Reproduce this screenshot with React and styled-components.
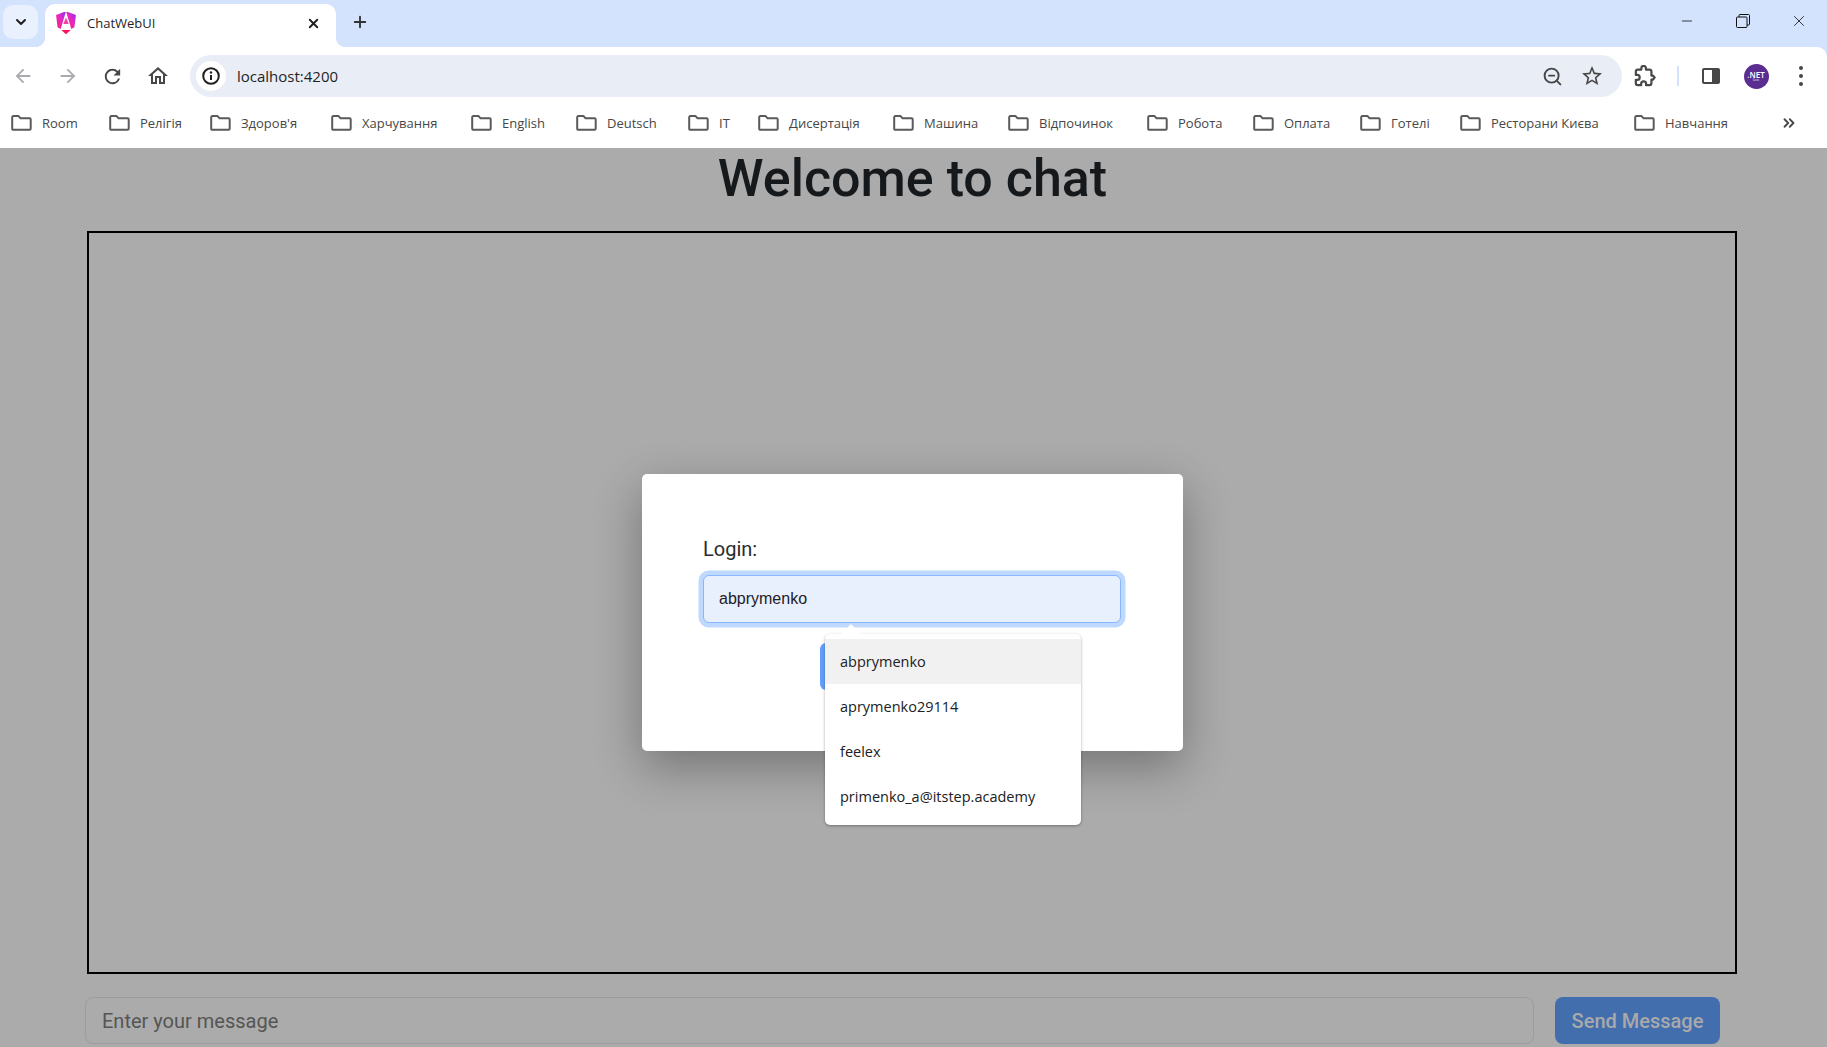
import React from "react";
import styled, { createGlobalStyle } from "styled-components";
import { Plus, X, ChevronDown, Minus, ZoomOut, ChevronsRight } from "lucide-react";

const GlobalStyle = createGlobalStyle`
    html, body {
        margin: 0;
        padding: 0;
        height: 100%;
        overflow: hidden;
    }

    body {
        background: #ababab;
        font-family: Roboto, "Liberation Sans", sans-serif;
    }

    * {
        box-sizing: border-box;
    }
`;

const Window = styled.div`
    display: flex;
    flex-direction: column;
    width: 100%;
    height: 100vh;
`;

const TabStrip = styled.div`
    display: flex;
    height: 47px;
    background: #d3e3fd;
    flex: none;
`;

const TabListButton = styled.div`
    display: flex;
    align-items: center;
    justify-content: center;
    width: 35px;
    height: 34px;
    margin: 5px 7px 0 3px;
    border-radius: 10px;
    background: #e9f0fe;
    color: #1f1f1f;
`;

const Tab = styled.div`
    position: relative;
    display: flex;
    align-items: center;
    width: 291px;
    height: 43px;
    margin-top: 4px;
    padding: 0 15px 5px 10px;
    border-radius: 10px 10px 0 0;
    background: #fff;

    &::before,
    &::after {
        content: "";
        position: absolute;
        bottom: 0;
        width: 10px;
        height: 10px;
    }

    &::before {
        left: -10px;
        background: radial-gradient(circle at 0 0, transparent 10px, #fff 10.5px);
    }

    &::after {
        right: -10px;
        background: radial-gradient(circle at 100% 0, transparent 10px, #fff 10.5px);
    }
`;

const TabTitle = styled.span`
    flex: 1;
    margin-left: 10px;
    font-family: "Open Sans", sans-serif;
    font-size: 13px;
    color: #1f1f1f;
`;

const NewTab = styled.div`
    display: flex;
    align-items: center;
    justify-content: center;
    width: 28px;
    height: 28px;
    margin: 8px 0 0 10px;
    color: #333;
`;

const WindowControls = styled.div`
    display: flex;
    margin-left: auto;
`;

const WindowButton = styled.div`
    display: flex;
    align-items: center;
    justify-content: center;
    width: 56px;
    height: 42px;
    color: #111;
`;

const Toolbar = styled.div`
    display: flex;
    align-items: flex-end;
    height: 50px;
    padding: 0 3px 0 0;
    background: #fff;
    border-radius: 0 10px 0 0;
    margin-top: 0;
    flex: none;
    position: relative;
    box-shadow: 10px 0 0 #d3e3fd;
`;

const NavButton = styled.div`
    display: flex;
    align-items: center;
    justify-content: center;
    width: ${p => p.$w || 45}px;
    height: 42px;
    flex: none;
    color: ${p => (p.$off ? "#a9abae" : "#474747")};
`;

const Omnibox = styled.div`
    display: flex;
    align-items: center;
    flex: 1;
    height: 42px;
    margin-left: 10px;
    padding: 0 10px 0 6px;
    border-radius: 21px;
    background: #e9edf6;
`;

const InfoChip = styled.div`
    display: flex;
    align-items: center;
    justify-content: center;
    width: 30px;
    height: 30px;
    border-radius: 50%;
    background: #fff;
`;

const Url = styled.span`
    flex: 1;
    margin-left: 11px;
    font-family: "Open Sans", sans-serif;
    font-size: 15px;
    color: #1f1f1f;
`;

const OmniIcon = styled.div`
    display: flex;
    align-items: center;
    justify-content: center;
    width: 40px;
    height: 30px;
    color: #474747;
`;

const Divider = styled.div`
    width: 2px;
    height: 20px;
    margin: 0 9px 11px;
    background: #d3e3fd;
    flex: none;
`;

const Avatar = styled.div`
    display: flex;
    flex-direction: column;
    align-items: center;
    justify-content: center;
    width: 25px;
    height: 25px;
    border-radius: 50%;
    background: #5c2d91;
    color: #fff;
    font-family: "Open Sans", sans-serif;
    line-height: 1;
`;

const AvatarMain = styled.span`
    font-size: 8px;
    font-weight: 600;
`;

const AvatarSub = styled.span`
    font-size: 3px;
`;

const MenuDots = styled.div`
    display: flex;
    flex-direction: column;
    gap: 4px;
`;

const Dot = styled.span`
    width: 4px;
    height: 4px;
    border-radius: 50%;
    background: #474747;
`;

const BookmarkBar = styled.div`
    display: flex;
    align-items: center;
    height: 51px;
    padding-left: 11px;
    background: #fff;
    flex: none;
`;

const Bookmark = styled.div`
    display: flex;
    align-items: center;
    gap: 10px;
    width: ${p => p.$w}px;
    flex: none;
    font-family: "Open Sans", sans-serif;
    font-size: 13px;
    color: #474747;
    white-space: nowrap;
`;

const MoreBookmarks = styled.div`
    display: flex;
    margin-left: auto;
    margin-right: 29px;
    color: #474747;
`;

const Main = styled.main`
    position: relative;
    display: flex;
    flex-direction: column;
    flex: 1;
    background: #ababab;
`;

const Title = styled.h1`
    margin: 0 2px 21px 0;
    height: 62px;
    font-size: 52px;
    font-weight: 500;
    line-height: 62px;
    text-align: center;
    color: #16191b;
`;

const ChatBox = styled.div`
    width: 1650px;
    height: 743px;
    margin-left: 87px;
    border: 2px solid #000;
`;

const InputRow = styled.div`
    display: flex;
    gap: 21px;
    margin: 23px 0 0 85px;
`;

const MessageInput = styled.input`
    width: 1449px;
    height: 47px;
    padding: 0 16px;
    border: 1px solid #9c9c9c;
    border-radius: 8px;
    background: transparent;
    font-family: Roboto, sans-serif;
    font-size: 20px;
    outline: none;

    &::placeholder {
        color: #555;
        opacity: 1;
    }
`;

const SendButton = styled.button`
    width: 165px;
    height: 47px;
    border: none;
    border-radius: 8px;
    background: #426eae;
    color: #a9a9a9;
    font-family: Roboto, sans-serif;
    font-size: 20px;
    font-weight: 500;
`;

const Overlay = styled.div`
    position: absolute;
    inset: 0;
    display: flex;
    justify-content: center;
    align-items: flex-start;
    padding: 326px 2px 0 0;
`;

const Modal = styled.div`
    position: relative;
    display: flex;
    flex-direction: column;
    width: 541px;
    height: 277px;
    padding: 60px 61px;
    border-radius: 5px;
    background: #fff;
    box-shadow: 0 16px 48px rgba(0, 0, 0, 0.32);
`;

const Label = styled.label`
    margin-bottom: 11px;
    font-size: 20px;
    line-height: 30px;
    color: #2b2b2b;
`;

const LoginInput = styled.input`
    width: 418px;
    height: 48px;
    padding: 0 15px;
    border: 1px solid #86b7fe;
    border-radius: 6px;
    background: #e8f0fe;
    box-shadow: 0 0 0 4.5px #bfd9fe;
    font-family: "Liberation Sans", sans-serif;
    font-size: 16px;
    color: #1d2024;
    outline: none;
`;

const LoginButton = styled.button`
    align-self: center;
    width: 186px;
    height: 47px;
    margin-top: 20px;
    border: none;
    border-radius: 6px;
    background: #629ffc;
    color: #fff;
    font-family: Roboto, sans-serif;
    font-size: 20px;
`;

const Suggestions = styled.ul`
    position: absolute;
    top: 160px;
    left: 183px;
    width: 256px;
    margin: 0;
    padding: 5px 0 6px;
    list-style: none;
    border-radius: 5px;
    background: #fff;
    box-shadow: 0 1px 3px rgba(0, 0, 0, 0.35);

    &::before {
        content: "";
        position: absolute;
        top: -10px;
        left: 16px;
        width: 20px;
        height: 10px;
        background: #fff;
        clip-path: polygon(50% 0, 100% 100%, 0 100%);
    }
`;

const Suggestion = styled.li`
    display: flex;
    align-items: center;
    height: 45px;
    padding-left: 15px;
    background: ${p => (p.$active ? "#f1f1f1" : "#fff")};
    font-family: "Open Sans", sans-serif;
    font-size: 14.5px;
    color: #202124;
`;

const bookmarks = [
    { name: "Room", w: 98 },
    { name: "Релігія", w: 101 },
    { name: "Здоров'я", w: 121 },
    { name: "Харчування", w: 140 },
    { name: "English", w: 105 },
    { name: "Deutsch", w: 112 },
    { name: "IT", w: 70 },
    { name: "Дисертація", w: 135 },
    { name: "Машина", w: 115 },
    { name: "Відпочинок", w: 139 },
    { name: "Робота", w: 106 },
    { name: "Оплата", w: 107 },
    { name: "Готелі", w: 100 },
    { name: "Ресторани Києва", w: 174 },
    { name: "Навчання", w: 100 },
];

const logins = ["abprymenko", "aprymenko29114", "feelex", "primenko_a@itstep.academy"];

const Glyph = ({ d, size = 24, fill = "currentColor" }) => (
    <svg width={size} height={size} viewBox="0 0 24 24" fill={fill}>
        <path d={d} fillRule="evenodd" />
    </svg>
);

const AngularLogo = () => (
    <svg width="22" height="24" viewBox="0 0 24 26">
        <defs>
            <linearGradient id="ng" x1="0" y1="1" x2="1" y2="0">
                <stop offset="0" stopColor="#ff1e6e" />
                <stop offset="0.55" stopColor="#e32ac4" />
                <stop offset="1" stopColor="#8a2cf5" />
            </linearGradient>
        </defs>
        <path d="M9.8 1 1.2 4.2l1.6 13.4 3.4 2L11.8 1z" fill="url(#ng)" />
        <path d="M14.2 1l8.6 3.2-1.6 13.4-3.4 2L12.2 1z" fill="url(#ng)" />
        <path d="M6.8 20.5h10.4l-5.2 4.7z" fill="#f9155e" />
        <path d="M12 14h-3l3-7 3 7z" fill="#f43fa0" />
    </svg>
);

const FolderIcon = () => (
    <svg width="21" height="16" viewBox="0 0 21 16" fill="none" stroke="#5a5a5a" strokeWidth="2" strokeLinejoin="round" style={{ flex: "none" }}>
        <path d="M1.2 2.2c0-.6.5-1.1 1.1-1.1h5.3l2 2.2h9c.6 0 1.1.5 1.1 1.1v9.300c0 .6-.5 1.100-1.100 1.100H2.300c-.6 0-1.100-.5-1.100-1.100z" />
    </svg>
);

const App = () => {
    return (
        <Window>
            <GlobalStyle />
            <TabStrip>
                <TabListButton>
                    <ChevronDown size={16} strokeWidth={3} />
                </TabListButton>
                <Tab>
                    <AngularLogo />
                    <TabTitle>ChatWebUI</TabTitle>
                    <X size={15} strokeWidth={3} color="#1f1f1f" />
                </Tab>
                <NewTab>
                    <Plus size={18} strokeWidth={2.5} />
                </NewTab>
                <WindowControls>
                    <WindowButton>
                        <Minus size={16} strokeWidth={1.2} />
                    </WindowButton>
                    <WindowButton>
                        <svg width="14" height="14" viewBox="0 0 14 14" fill="none" stroke="#111" strokeWidth="1">
                            <rect x="0.5" y="3" width="10.500" height="10.500" rx="1" />
                            <path d="M3 3V1.500c0-.6.4-1 1-1h8.500c.6 0 1 .4 1 1V10c0 .6-.4 1-1 1H11" />
                        </svg>
                    </WindowButton>
                    <WindowButton>
                        <X size={18} strokeWidth={1.1} />
                    </WindowButton>
                </WindowControls>
            </TabStrip>
            <Toolbar>
                <NavButton $off>
                    <Glyph size={22} d="M20 11H7.830l5.590-5.590L12 4l-8 8 8 8 1.410-1.410L7.830 13H20v-2z" />
                </NavButton>
                <NavButton $off>
                    <Glyph size={22} d="M4 11h12.170l-5.590-5.590L12 4l8 8-8 8-1.410-1.410L16.170 13H4v-2z" />
                </NavButton>
                <NavButton>
                    <Glyph size={23} d="M17.650 6.350A7.958 7.958 0 0 0 12 4c-4.420 0-7.990 3.580-7.990 8s3.570 8 7.990 8c3.730 0 6.840-2.550 7.730-6h-2.080A5.990 5.990 0 0 1 12 18c-3.310 0-6-2.690-6-6s2.690-6 6-6c1.660 0 3.140.690 4.220 1.780L13 11h7V4l-2.350 2.350z" />
                </NavButton>
                <NavButton>
                    <Glyph size={24} d="M12 5.690l5 4.500V18h-2v-6H9v6H7v-7.810l5-4.500M12 3L2 12h3v8h6v-6h2v6h6v-8h3L12 3z" />
                </NavButton>
                <Omnibox>
                    <InfoChip>
                        <svg width="20" height="20" viewBox="0 0 20 20" fill="none">
                            <circle cx="10" cy="10" r="7.800" stroke="#1f1f1f" strokeWidth="2" />
                            <path d="M10 9v5" stroke="#1f1f1f" strokeWidth="2" />
                            <circle cx="10" cy="6.500" r="1.200" fill="#1f1f1f" />
                        </svg>
                    </InfoChip>
                    <Url>localhost:4200</Url>
                    <OmniIcon>
                        <ZoomOut size={21} strokeWidth={2.2} />
                    </OmniIcon>
                    <OmniIcon>
                        <Glyph size={24} d="M22 9.240l-7.190-.620L12 2 9.190 8.630 2 9.240l5.460 4.730L5.820 21 12 17.270 18.180 21l-1.630-7.030L22 9.240zM12 15.400l-3.760 2.270 1-4.280-3.320-2.880 4.380-.380L12 6.100l1.710 4.040 4.380.380-3.320 2.880 1 4.280L12 15.400z" />
                    </OmniIcon>
                </Omnibox>
                <NavButton $w={46}>
                    <Glyph size={23} fill="none" d="" />
                    <svg width="22" height="22" viewBox="0 0 24 24" fill="none" stroke="#474747" strokeWidth="2.400" strokeLinejoin="round" style={{ marginLeft: -23 }}>
                        <path d="M20.500 11.500H19V7c0-1.100-.9-2-2-2h-4V3.500a2.500 2.500 0 0 0-5 0V5H4c-1.100 0-2 .9-2 2v3.800h1.500a2.700 2.700 0 0 1 0 5.400H2V20c0 1.100.9 2 2 2h3.800v-1.500a2.700 2.700 0 0 1 5.400 0V22H17c1.100 0 2-.9 2-2v-4h1.500l2-2.300z" />
                    </svg>
                </NavButton>
                <Divider />
                <NavButton $w={46}>
                    <svg width="20" height="20" viewBox="0 0 20 20">
                        <rect x="1" y="2" width="18" height="16" rx="2" fill="#474747" />
                        <rect x="3" y="4" width="8" height="12" fill="#fff" />
                    </svg>
                </NavButton>
                <NavButton $w={44}>
                    <Avatar>
                        <AvatarMain>.NET</AvatarMain>
                        <AvatarSub>Core</AvatarSub>
                    </Avatar>
                </NavButton>
                <NavButton $w={46}>
                    <MenuDots>
                        <Dot />
                        <Dot />
                        <Dot />
                    </MenuDots>
                </NavButton>
            </Toolbar>
            <BookmarkBar>
                {bookmarks.map(item => (
                    <Bookmark key={item.name} $w={item.w}>
                        <FolderIcon />
                        {item.name}
                    </Bookmark>
                ))}
                <MoreBookmarks>
                    <ChevronsRight size={18} strokeWidth={2.4} />
                </MoreBookmarks>
            </BookmarkBar>
            <Main>
                <Title>Welcome to chat</Title>
                <ChatBox />
                <InputRow>
                    <MessageInput placeholder="Enter your message" />
                    <SendButton>Send Message</SendButton>
                </InputRow>
                <Overlay>
                    <Modal>
                        <Label>Login:</Label>
                        <LoginInput defaultValue="abprymenko" />
                        <LoginButton>Login</LoginButton>
                        <Suggestions>
                            {logins.map((login, i) => (
                                <Suggestion key={login} $active={i === 0}>{login}</Suggestion>
                            ))}
                        </Suggestions>
                    </Modal>
                </Overlay>
            </Main>
        </Window>
    );
};

export default App;
